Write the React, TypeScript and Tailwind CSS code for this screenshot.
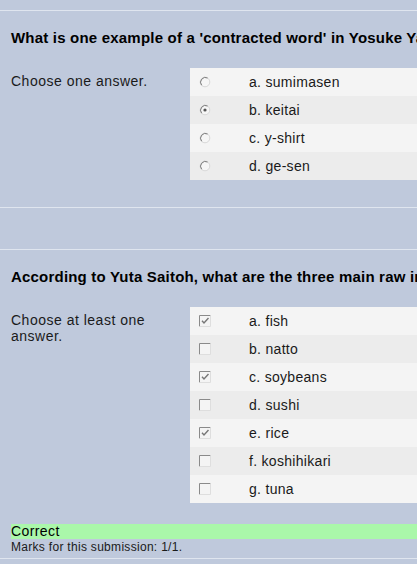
import type { ReactNode } from 'react';

interface Choice {
  label: string;
  checked: boolean;
}

const q1: Choice[] = [
  { label: 'a. sumimasen', checked: false },
  { label: 'b. keitai', checked: true },
  { label: 'c. y-shirt', checked: false },
  { label: 'd. ge-sen', checked: false },
];

const q2: Choice[] = [
  { label: 'a. fish', checked: true },
  { label: 'b. natto', checked: false },
  { label: 'c. soybeans', checked: true },
  { label: 'd. sushi', checked: false },
  { label: 'e. rice', checked: true },
  { label: 'f. koshihikari', checked: false },
  { label: 'g. tuna', checked: false },
];

function Radio({ checked }: { checked: boolean }) {
  return (
    <svg width="12" height="12" viewBox="0 0 12 12" className="shrink-0">
      <circle cx="6" cy="6" r="4.8" fill="#f6f6f6" stroke="#d8d8d8" strokeWidth="1" />
      <path d="M2.6 9.2 A4.8 4.8 0 0 1 8.6 2" fill="none" stroke="#7a7a7a" strokeWidth="1" />
      {checked && <circle cx="6" cy="6" r="1.6" fill="#555" />}
    </svg>
  );
}

function Checkbox({ checked }: { checked: boolean }) {
  return (
    <svg width="12" height="12" viewBox="0 0 12 12" className="shrink-0">
      <rect x="0.5" y="0.5" width="11" height="11" fill="#f4f4f4" />
      <path d="M0.5 11.5 V0.5 H11.5" fill="none" stroke="#8a8a8a" strokeWidth="1" />
      <path d="M11.5 0.5 V11.5 H0.5" fill="none" stroke="#dedede" strokeWidth="1" />
      {checked && <path d="M3 5.8 L5 8 L9.5 3" fill="none" stroke="#777" strokeWidth="1.4" />}
    </svg>
  );
}

function Question({ title, prompt, children }: { title: string; prompt: ReactNode; children: ReactNode }) {
  return (
    <div className="pt-[19px]">
      <h3 className="pl-[11px] text-[15px] leading-[16px] font-bold tracking-[0.2px] text-black whitespace-nowrap overflow-hidden">
        {title}
      </h3>
      <div className="flex mt-[22px]">
        <div className="w-[190px] shrink-0 pl-[11px] pr-[36px] pt-[5px] text-[14px] leading-[16px] tracking-[0.5px] text-[#1a1a1a]">
          {prompt}
        </div>
        <div className="flex-1 flex flex-col">{children}</div>
      </div>
    </div>
  );
}

export default function App() {
  return (
    <div className="w-[417px] h-[564px] overflow-hidden bg-[#bfc9dc] font-['Liberation_Sans',Arial,sans-serif]">
      <div className="h-[11px] border-b border-[#dfe5ef]" />

      <Question title="What is one example of a 'contracted word' in Yosuke Yamaguchi's essay?" prompt="Choose one answer.">
        {q1.map((c, i) => (
          <div
            key={c.label}
            className={`h-[28px] flex items-center ${i % 2 === 0 ? 'bg-[#f4f4f4]' : 'bg-[#ececec]'}`}
          >
            <div className="pl-[9px] w-[59px]">
              <Radio checked={c.checked} />
            </div>
            <span className="text-[14px] text-[#1a1a1a] tracking-[0.3px]">{c.label}</span>
          </div>
        ))}
      </Question>

      <div className="h-[28px] border-b border-[#dfe5ef]" />
      <div className="h-[42px] border-b border-[#dfe5ef]" />

      <Question title="According to Yuta Saitoh, what are the three main raw ingredients of miso?" prompt="Choose at least one answer.">
        {q2.map((c, i) => (
          <div
            key={c.label}
            className={`h-[28px] flex items-center ${i % 2 === 0 ? 'bg-[#f4f4f4]' : 'bg-[#ececec]'}`}
          >
            <div className="pl-[9px] w-[59px]">
              <Checkbox checked={c.checked} />
            </div>
            <span className="text-[14px] text-[#1a1a1a] tracking-[0.3px]">{c.label}</span>
          </div>
        ))}
      </Question>

      <div className="pl-[11px] mt-[21px]">
        <div className="h-[15px] bg-[#aaf7aa] text-[14px] leading-[15px] tracking-[0.4px] text-black">Correct</div>
        <div className="text-[12px] leading-[14px] tracking-[0.3px] text-[#1a1a1a] pt-[1px]">Marks for this submission: 1/1.</div>
      </div>
      <div className="mt-[4px] border-b border-[#dfe5ef]" />
    </div>
  );
}
